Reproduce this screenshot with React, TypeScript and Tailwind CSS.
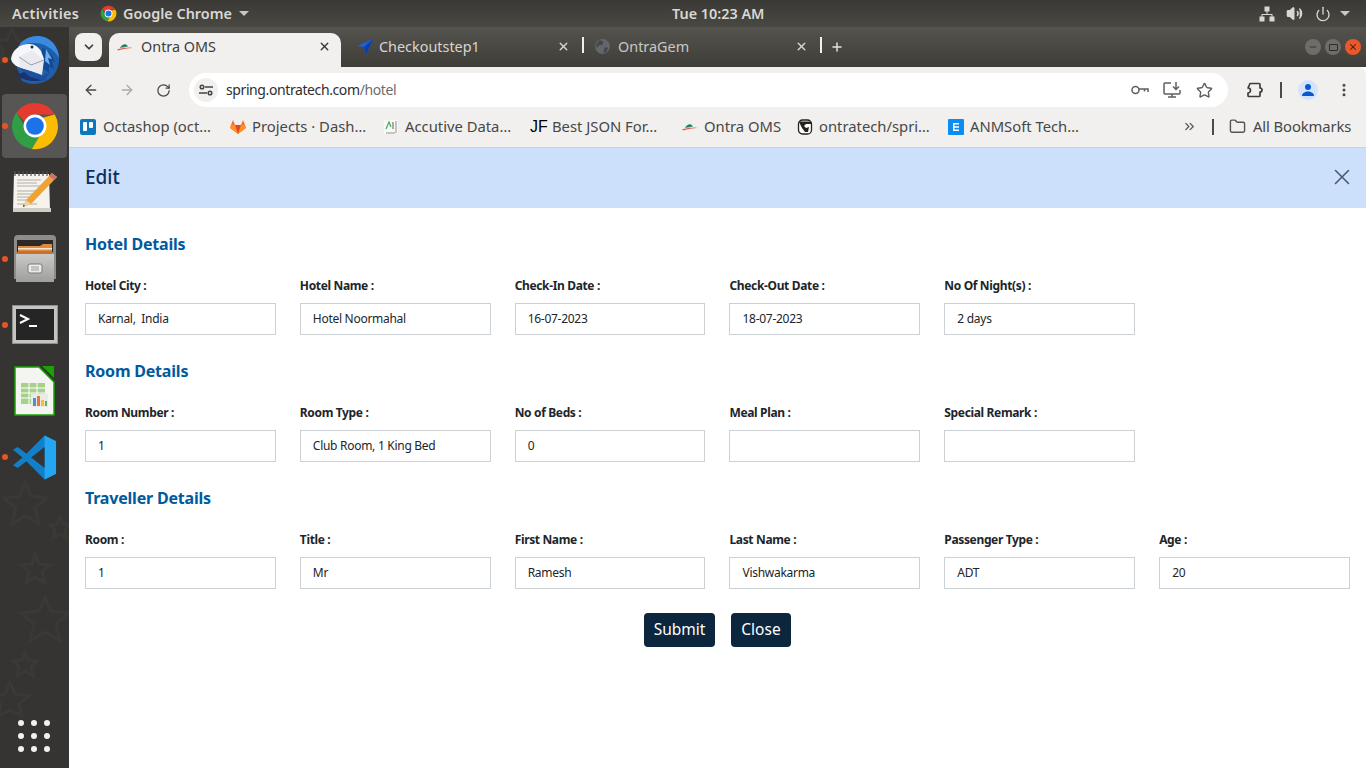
import React from "react";
import { ArrowLeft, ArrowRight, RotateCw, Star, X, Plus, ChevronDown, Minus, EllipsisVertical, ChevronsRight, Folder, Volume2, Power } from "lucide-react";

const font = { fontFamily: '"Noto Sans", sans-serif' };

function ChromeLogo({ size }: { size: number }) {
  return (
    <svg width={size} height={size} viewBox="0 0 48 48">
      <path d="M24 2a22 22 0 0 1 19 11H24a11 11 0 0 0-10 6.500L6.300 11A22 22 0 0 1 24 2z" fill="#e53b2f" />
      <path d="M6.300 11 16 27.500A11 11 0 0 0 28 34.400L21 46A22 22 0 0 1 6.300 11z" fill="#2f9e44" />
      <path d="M43 13A22 22 0 0 1 21 46l10.500-18A11 11 0 0 0 31 16z" fill="#fbbc04" />
      <circle cx="24" cy="24" r="11" fill="#fff" />
      <circle cx="24" cy="24" r="8.500" fill="#1a73e8" />
    </svg>
  );
}

function OntraIcon() {
  return (
    <svg width="16" height="16" viewBox="0 0 16 16">
      <path d="M3 9c2-4 6-5 8-1.500z" fill="#2f8f5b" />
      <path d="M5 8c1.500-2 4-3 5-1.500z" fill="#2b5fa8" />
      <path d="M0 10.500c5-2 10-2 16-1.500-5 0-10 1-15 2.500z" fill="#e4574c" />
      <path d="M11 8l4 .5-3 .5z" fill="#e8a33d" />
    </svg>
  );
}

function Thunderbird() {
  return (
    <svg width="50" height="50" viewBox="0 0 50 50">
      <path d="M10 8C20-2 38-1 46 12c6 11 3 26-8 33-9 5-18 5-26 1L6 30z" fill="#1f5fa8" />
      <path d="M10 9C19-1 35-2 44 9c3 4 5 9 5 14C44 14 34 8 24 8 18 8 13 9 8 13z" fill="#3a8ae0" />
      <path d="M32 13c6 2 11 8 13 14l-3-1 2 8-5-3 0 7-6-5z" fill="#134a96" />
      <path d="M36 14l6 10-4-1 2 7-5-4z" fill="#6fb0ee" />
      <path d="M6 40c8 6 20 8 30 4l-6-3-16-4z" fill="#1b3270" />
      <path d="M1 24C2 15 10 9 19 9c6 0 9 3 12 7l3 8-4 14L14 34C7 32 2 29 1 24z" fill="#f5f7fc" />
      <path d="M9 22l13-7 12 10-2 15-22-8z" fill="#e9ebf1" />
      <path d="M9 22l12 8 13-5" fill="none" stroke="#9aa0ab" strokeWidth="1" />
      <path d="M8 32l24 9 8-4-6 9-14-4z" fill="#1f4f9c" />
      <circle cx="22" cy="12" r="1.500" fill="#1d2d48" />
    </svg>
  );
}

function Notepad() {
  return (
    <svg width="48" height="42" viewBox="0 0 48 42">
      <path d="M3 3h35l1 37H2z" fill="#f5f3ec" />
      <rect x="2" y="37" width="38" height="4" fill="#cfcdc6" />
      <path d="M4 0v5M8 0v5M12 0v5M16 0v5M20 0v5M24 0v5M28 0v5M32 0v5M36 0v5" stroke="#55534f" strokeWidth="1.200" />
      <path d="M6 9h24M6 12h20M6 15h26M6 20h24M6 23h18M6 26h14M6 29h10M6 33h20" stroke="#b0aea8" strokeWidth="1" />
      <path d="M41 2l5 4-26 27-8 3 3-7z" fill="#f0a232" />
      <path d="M41 2l5 4-3 3-5-4z" fill="#c9736d" />
      <path d="M15 29l5 4-8 3z" fill="#e9d2a8" />
      <path d="M12.500 33.500l1.500 1.500-2 1z" fill="#333" />
    </svg>
  );
}

function Cabinet() {
  return (
    <svg width="44" height="47" viewBox="0 0 44 47">
      <defs>
        <linearGradient id="cabinetFront" x1="0" y1="0" x2="0" y2="1">
          <stop offset="0" stopColor="#c9c9c7" />
          <stop offset="1" stopColor="#9e9e9c" />
        </linearGradient>
      </defs>
      <path d="M1 4a4 4 0 0 1 4-4h34a4 4 0 0 1 4 4v40H1z" fill="#8c8c8a" />
      <rect x="4" y="5" width="36" height="12" fill="#2c2a28" />
      <path d="M5 11h22l3-2h9v8H5z" fill="#e08a3c" />
      <rect x="5" y="13" width="34" height="1.500" fill="#f5e6d0" />
      <rect x="5" y="16" width="34" height="3" fill="#c8702c" />
      <path d="M3 19h38v28H3z" fill="url(#cabinetFront)" />
      <rect x="15" y="29" width="14" height="9" rx="2" fill="#ecebe8" stroke="#7b7b79" />
      <rect x="18" y="31" width="8" height="5" fill="#c4c4c2" />
    </svg>
  );
}

function Terminal() {
  return (
    <svg width="46" height="39" viewBox="0 0 46 39">
      <rect x="0.500" y="0.500" width="45" height="38" fill="#c4c4c2" stroke="#8f8f8d" />
      <rect x="4" y="4" width="38" height="31" fill="#252525" />
      <path d="M8 10l8 4-8 4" fill="none" stroke="#fff" strokeWidth="2" />
      <rect x="17" y="20" width="8" height="2" fill="#fff" />
    </svg>
  );
}

function Calc() {
  return (
    <svg width="41" height="50" viewBox="0 0 41 50">
      <path d="M1 1h24l15 15v33H1z" fill="#f4f5f0" stroke="#18a303" strokeWidth="1.500" />
      <path d="M28 0h12v12z" fill="#18a303" />
      <rect x="7" y="17" width="24" height="21" fill="#a8d08d" />
      <path d="M7 22h24M7 27h24M7 32h24M15 17v21M23 17v21" stroke="#fff" strokeWidth="1" />
      <rect x="17" y="28" width="17" height="13" fill="#e8ebe6" />
      <rect x="19" y="32" width="3" height="8" fill="#4f8fd0" />
      <rect x="23" y="30" width="3" height="10" fill="#e8743b" />
      <rect x="27" y="34" width="3" height="6" fill="#f0c13c" />
      <rect x="31" y="35" width="2" height="5" fill="#5fb34d" />
    </svg>
  );
}

function VsCode() {
  return (
    <svg width="44" height="45" viewBox="0 0 46 46">
      <path d="M33 0l12 6v34l-12 6L14 27 5 34 0 31l10-8L0 15l5-3 9 7z" fill="#1280c9" />
      <path d="M33 0l12 6v34l-12 6z" fill="#24a6f2" />
      <path d="M33 12L19 23l14 11z" fill="#353432" />
    </svg>
  );
}

function DockStars() {
  return (
    <svg className="absolute inset-0" width="69" height="741" viewBox="0 0 69 741" fill="none" stroke="#3a3936" strokeWidth="3">
      <path d="M12 2l6 12 14 1-10 9 3 13-13-7-12 6 3-13-9-9 13-1z" />
      <path d="M25 455l6 14 16 2-12 10 4 16-14-8-13 8 4-16-12-10 16-2z" />
      <path d="M60 490l3 7 7 1-5 5 2 8-7-4-7 4 2-8-5-5 7-1z" />
      <path d="M35 527l4 10 11 1-8 7 3 11-10-6-9 6 3-11-8-7 11-1z" />
      <path d="M45 570l6 14 18 2-13 11 4 17-15-9-15 9 4-17-13-11 18-2z" />
      <path d="M25 625l3 8 9 1-6 6 2 9-8-5-8 5 2-9-6-6 9-1z" />
      <path d="M10 655l5 12 14 2-10 8 3 12-12-6-12 6 3-12-10-8 14-2z" />
    </svg>
  );
}

function Dock() {
  const icons = [
    { node: <Thunderbird />, dot: true, active: false },
    { node: <ChromeLogo size={50} />, dot: true, active: true },
    { node: <Notepad />, dot: false, active: false },
    { node: <Cabinet />, dot: true, active: false },
    { node: <Terminal />, dot: true, active: false },
    { node: <Calc />, dot: false, active: false },
    { node: <VsCode />, dot: true, active: false },
  ];
  return (
    <div className="relative flex w-[69px] shrink-0 flex-col bg-[#353432]">
      <DockStars />
      {icons.map((item, i) => (
        <div key={i} className="relative flex h-[66.200px] items-center justify-center">
          {item.active && <div className="absolute inset-x-[2px] inset-y-[1px] rounded-[4px] bg-[#575654]" />}
          {item.dot && <div className="absolute left-[2px] top-[30px] h-[6px] w-[6px] rounded-full bg-[#e95420]" />}
          <div className="relative">{item.node}</div>
        </div>
      ))}
      <div className="relative mt-auto mb-[16px] ml-[18px] grid w-[32px] grid-cols-3 gap-x-[7px] gap-y-[7px]">
        {[0, 1, 2, 3, 4, 5, 6, 7, 8].map((n) => (
          <span key={n} className="h-[6px] w-[6px] rounded-full bg-[#f1f1f1]" />
        ))}
      </div>
    </div>
  );
}

function TopBar() {
  return (
    <div className="flex h-[27px] shrink-0 items-center bg-gradient-to-b from-[#3b3935] to-[#4a4843] text-[14.400px] font-semibold text-[#d8d8d4]">
      <span className="ml-[12px] w-[88px] tracking-[0.300px]">Activities</span>
      <ChromeLogo size={17} />
      <span className="ml-[6px]">Google Chrome</span>
      <span className="ml-[7px] h-0 w-0 border-x-[5px] border-t-[5px] border-x-transparent border-t-[#c8c8c4]" />
      <span className="absolute left-[672px]">Tue 10:23 AM</span>
      <div className="ml-auto mr-[16px] flex items-center gap-[6px]">
        <svg width="16" height="16" viewBox="0 0 16 16" fill="#d8d8d4" className="mr-[5px]">
          <rect x="5.500" y="0.500" width="5" height="5" />
          <rect x="0.500" y="10.500" width="5" height="5" />
          <rect x="10.500" y="10.500" width="5" height="5" />
          <path d="M7.500 5h1v3h5v3h-1V9H3.500v2h-1V8h5z" />
        </svg>
        <Volume2 size={17} color="#d8d8d4" fill="#d8d8d4" />
        <Power size={16} color="#d8d8d4" className="ml-[6px]" strokeWidth={2} />
        <span className="ml-[3px] h-0 w-0 border-x-[5px] border-t-[5px] border-x-transparent border-t-[#c8c8c4]" />
      </div>
    </div>
  );
}

function Tabs() {
  return (
    <div className="flex h-[40px] shrink-0 bg-gradient-to-b from-[#55534d] to-[#3f3d38] pt-[6px] text-[14.400px]">
      <button className="ml-[6px] flex h-[28px] w-[27px] items-center justify-center rounded-[8px] bg-[#f1f0ee]">
        <ChevronDown size={14} strokeWidth={3} color="#3c3c3c" />
      </button>
      <div className="ml-[7px] flex h-[34px] w-[232px] items-center rounded-t-[10px] bg-[#f1f0ee] pb-[7px] pl-[8px] pr-[10px] text-[#3e3e3e]">
        <OntraIcon />
        <span className="ml-[8px]">Ontra OMS</span>
        <X size={13} strokeWidth={2.500} color="#333" className="ml-auto" />
      </div>
      <div className="flex h-[27px] w-[241px] items-center pl-[16px] pr-[12px] text-[#d7d6d2]">
        <svg width="16" height="16" viewBox="0 0 16 16">
          <path d="M16 0L0 7l7 1 2 8z" fill="#1f5fe0" />
          <path d="M16 0L7 8l2 8z" fill="#0e3ea8" />
        </svg>
        <span className="ml-[6px]">Checkoutstep1</span>
        <X size={13} strokeWidth={2.500} color="#d7d6d2" className="ml-auto" />
      </div>
      <div className="mt-[4px] h-[16px] w-[2px] bg-[#f1f0ee]" />
      <div className="flex h-[27px] w-[236px] items-center pl-[11px] pr-[12px] text-[#c9c8c4]">
        <svg width="15" height="15" viewBox="0 0 16 16">
          <circle cx="8" cy="8" r="8" fill="#64666b" />
          <path d="M5 1l4 2-1 3-4 1-2 3-1-4zM10 9l4 0-2 5-3 1z" fill="#45474b" />
        </svg>
        <span className="ml-[8px]">OntraGem</span>
        <X size={13} strokeWidth={2.500} color="#d7d6d2" className="ml-auto" />
      </div>
      <div className="mt-[4px] h-[16px] w-[2px] bg-[#f1f0ee]" />
      <Plus size={14} strokeWidth={2.500} color="#e4e3df" className="ml-[8px] mt-[7px]" />
      <div className="ml-auto mr-[5px] mt-[6px] flex h-[16px] gap-[4px]">
        <span className="flex h-[16px] w-[16px] items-center justify-center rounded-full bg-[#6e6d69]">
          <Minus size={10} color="#2c2b29" strokeWidth={2} />
        </span>
        <span className="flex h-[16px] w-[16px] items-center justify-center rounded-full bg-[#6e6d69]">
          <span className="h-[7px] w-[9px] rounded-[1px] border border-[#2c2b29]" />
        </span>
        <span className="flex h-[16px] w-[16px] items-center justify-center rounded-full bg-[#e9582a]">
          <X size={10} color="#4a1a08" strokeWidth={2.500} />
        </span>
      </div>
    </div>
  );
}

function Toolbar() {
  return (
    <div className="flex h-[40px] shrink-0 items-end rounded-tr-[8px] bg-[#f1f0ee] pl-[14px]">
      <div className="flex h-[34px] items-center">
        <ArrowLeft size={16} strokeWidth={2} color="#474747" />
        <ArrowRight size={16} strokeWidth={2} color="#a9a9a9" className="ml-[20px]" />
        <RotateCw size={15} strokeWidth={2} color="#474747" className="ml-[21px]" />
      </div>
      <div className="ml-[18px] flex h-[34px] w-[1039px] items-center rounded-full bg-white pl-[5px] pr-[15px] text-[14px] tracking-[-0.400px]">
        <span className="flex h-[24px] w-[24px] items-center justify-center rounded-full bg-[#f1f0ee]">
          <svg width="14" height="12" viewBox="0 0 14 12" fill="none" stroke="#444" strokeWidth="1.500">
            <circle cx="3" cy="3" r="1.800" />
            <path d="M6 3h8M0 9h8" />
            <circle cx="11" cy="9" r="1.800" />
          </svg>
        </span>
        <span className="ml-[8px] pb-[1px] text-[#2f2f2f]">spring.ontratech.com</span>
        <span className="pb-[1px] text-[#6d6d6d]">/hotel</span>
        <svg width="18" height="10" viewBox="0 0 18 10" fill="none" stroke="#5f5f5f" strokeWidth="1.500" className="ml-auto">
          <circle cx="4.500" cy="5" r="3.500" />
          <path d="M8 4h9v3M13.500 4v2.500" />
        </svg>
        <svg width="18" height="18" viewBox="0 0 18 18" fill="none" stroke="#5f5f5f" strokeWidth="1.500" className="ml-[14px]">
          <path d="M8 2H2a1 1 0 0 0-1 1v9a1 1 0 0 0 1 1h14a1 1 0 0 0 1-1V9" />
          <path d="M5 16h8M9 13v3M13 1v7M10 5.500l3 3 3-3" />
        </svg>
        <Star size={17} color="#5f5f5f" strokeWidth={2} className="ml-[15px]" />
      </div>
      <div className="flex h-[34px] items-center">
        <svg width="18" height="18" viewBox="0 0 18 18" fill="none" stroke="#3d3d3d" strokeWidth="1.700" className="ml-[17px]">
          <path d="M5 2.500h9a1 1 0 0 1 1 1V7a2 2 0 0 1 0 4v3.500a1 1 0 0 1-1 1H4a1 1 0 0 1-1-1V12a2.500 2.500 0 0 0 0-5z" strokeLinejoin="round" />
        </svg>
        <span className="ml-[17px] h-[16px] w-[2px] bg-[#4a4a4a]" />
        <span className="ml-[16px] flex h-[20px] w-[20px] items-center justify-center rounded-full bg-[#d3e3fd]">
          <svg width="14" height="14" viewBox="0 0 14 14" fill="#0b57d0">
            <circle cx="7" cy="4" r="3" />
            <path d="M1 13c0-3 3-4.500 6-4.500s6 1.500 6 4.500z" />
          </svg>
        </span>
        <EllipsisVertical size={16} color="#474747" strokeWidth={2.500} className="ml-[18px]" />
      </div>
    </div>
  );
}

function Bookmarks() {
  return (
    <div className="flex h-[41px] shrink-0 items-center border-b border-[#c4d2e4] bg-[#f1f0ee] pb-[1px] pl-[11px] text-[14.800px] text-[#474747]">
      <div className="flex w-[150px] items-center gap-[7px]">
        <svg width="16" height="16" viewBox="0 0 16 16">
          <rect width="16" height="16" rx="2" fill="#0c79bf" />
          <rect x="3" y="3" width="4" height="9" rx="1" fill="#fff" />
          <rect x="9" y="3" width="4" height="6" rx="1" fill="#fff" />
        </svg>
        <span>Octashop (oct…</span>
      </div>
      <div className="flex w-[153px] items-center gap-[6px]">
        <svg width="16" height="16" viewBox="0 0 16 16">
          <path d="M8 15L0 9l1-3 2-5 2 5h6l2-5 2 5 1 3z" fill="#fc6d26" />
          <path d="M8 15L5 6h6z" fill="#e24329" />
          <path d="M8 15L0 9l1-3h4zM8 15l8-6-1-3h-4z" fill="#fca326" opacity="0.700" />
        </svg>
        <span>Projects · Dash…</span>
      </div>
      <div className="flex w-[147px] items-center gap-[6px]">
        <svg width="16" height="16" viewBox="0 0 16 16">
          <rect x="1" y="1" width="14" height="14" fill="#f8f8f6" />
          <path d="M12 14H3M13 2v12" stroke="#b5b5b0" strokeWidth="1.500" />
          <path d="M3 10l3-7 2 5" fill="none" stroke="#45a85b" strokeWidth="1.200" />
          <path d="M10 3v7" stroke="#777" strokeWidth="1.200" />
        </svg>
        <span>Accutive Data…</span>
      </div>
      <div className="flex w-[152px] items-center gap-[6px]">
        <span className="w-[16px] text-[16px] leading-none text-black" style={{ fontFamily: '"Liberation Sans", sans-serif' }}>JF</span>
        <span>Best JSON For…</span>
      </div>
      <div className="flex w-[115px] items-center gap-[6px]">
        <OntraIcon />
        <span>Ontra OMS</span>
      </div>
      <div className="flex w-[151px] items-center gap-[6px]">
        <svg width="16" height="16" viewBox="0 0 16 16">
          <rect x="1.500" y="1" width="13" height="14" rx="4" fill="#fff" stroke="#222" strokeWidth="1.300" />
          <path d="M2 2.500h12v2.500H9L7 7l2 2 3-1-1 5H8L5 9 3 5z" fill="#222" />
        </svg>
        <span>ontratech/spri…</span>
      </div>
      <div className="flex w-[234px] items-center gap-[6px]">
        <svg width="16" height="16" viewBox="0 0 16 16">
          <rect width="16" height="16" rx="1" fill="#0a8cf5" />
          <path d="M5 4h6v1.500H6.500v1.700H11v1.500H6.500v1.800H11V12H5z" fill="#fff" />
        </svg>
        <span>ANMSoft Tech…</span>
      </div>
      <ChevronsRight size={15} strokeWidth={2} color="#555" />
      <span className="ml-[15px] h-[16px] w-[2px] bg-[#4a4a4a]" />
      <Folder size={17} strokeWidth={2} color="#555" className="ml-[15px]" />
      <span className="ml-[7px] tracking-[-0.100px]">All Bookmarks</span>
    </div>
  );
}

type FieldDef = { label: string; value: string };

function Section({ title, fields }: { title: string; fields: FieldDef[] }) {
  return (
    <section className="h-[127px] pt-[24px]">
      <h3 className="h-[24px] text-[16px] font-bold leading-[24px] tracking-[-0.200px] text-[#005a9e]">{title}</h3>
      <div className="mt-[21px] grid grid-cols-6 gap-x-6">
        {fields.map((f) => (
          <div key={f.label}>
            <label className="block h-[18px] text-[12px] font-bold leading-[18px] tracking-[-0.350px] text-[#212529]">{f.label}</label>
            <input
              readOnly
              value={f.value}
              className="mt-[8px] block h-[32px] w-full border border-[#ccd1d5] bg-white px-[12px] pb-[2px] text-[12px] tracking-[-0.280px] text-[#212529] outline-none"
            />
          </div>
        ))}
      </div>
    </section>
  );
}

const hotel: FieldDef[] = [
  { label: "Hotel City :", value: "Karnal,  India" },
  { label: "Hotel Name :", value: "Hotel Noormahal" },
  { label: "Check-In Date :", value: "16-07-2023" },
  { label: "Check-Out Date :", value: "18-07-2023" },
  { label: "No Of Night(s) :", value: "2 days" },
];

const room: FieldDef[] = [
  { label: "Room Number :", value: "1" },
  { label: "Room Type :", value: "Club Room, 1 King Bed" },
  { label: "No of Beds :", value: "0" },
  { label: "Meal Plan :", value: "" },
  { label: "Special Remark :", value: "" },
];

const traveller: FieldDef[] = [
  { label: "Room :", value: "1" },
  { label: "Title :", value: "Mr" },
  { label: "First Name :", value: "Ramesh" },
  { label: "Last Name :", value: "Vishwakarma" },
  { label: "Passenger Type :", value: "ADT" },
  { label: "Age :", value: "20" },
];

export default function App() {
  return (
    <div className="relative flex h-[768px] w-[1366px] flex-col overflow-hidden bg-white" style={font}>
      <TopBar />
      <div className="flex min-h-0 flex-1">
        <Dock />
        <div className="flex min-w-0 flex-1 flex-col">
          <Tabs />
          <Toolbar />
          <Bookmarks />
          <div className="flex h-[60px] shrink-0 items-center justify-between bg-[#cce0fc] pb-[2px] pl-[16px] pr-[11px]">
            <span className="text-[19px] font-medium text-[#0a2f5f]">Edit</span>
            <X size={26} strokeWidth={1.500} color="#4a5a6c" />
          </div>
          <div className="px-4">
            <Section title="Hotel Details" fields={hotel} />
            <Section title="Room Details" fields={room} />
            <Section title="Traveller Details" fields={traveller} />
            <div className="flex justify-center gap-4 pt-[24px]">
              <button className="h-[34px] w-[71px] rounded-[4px] bg-[#0c263d] text-[15.500px] text-white">Submit</button>
              <button className="h-[34px] w-[60px] rounded-[4px] bg-[#0c263d] text-[15.500px] text-white">Close</button>
            </div>
          </div>
        </div>
      </div>
    </div>
  );
}
